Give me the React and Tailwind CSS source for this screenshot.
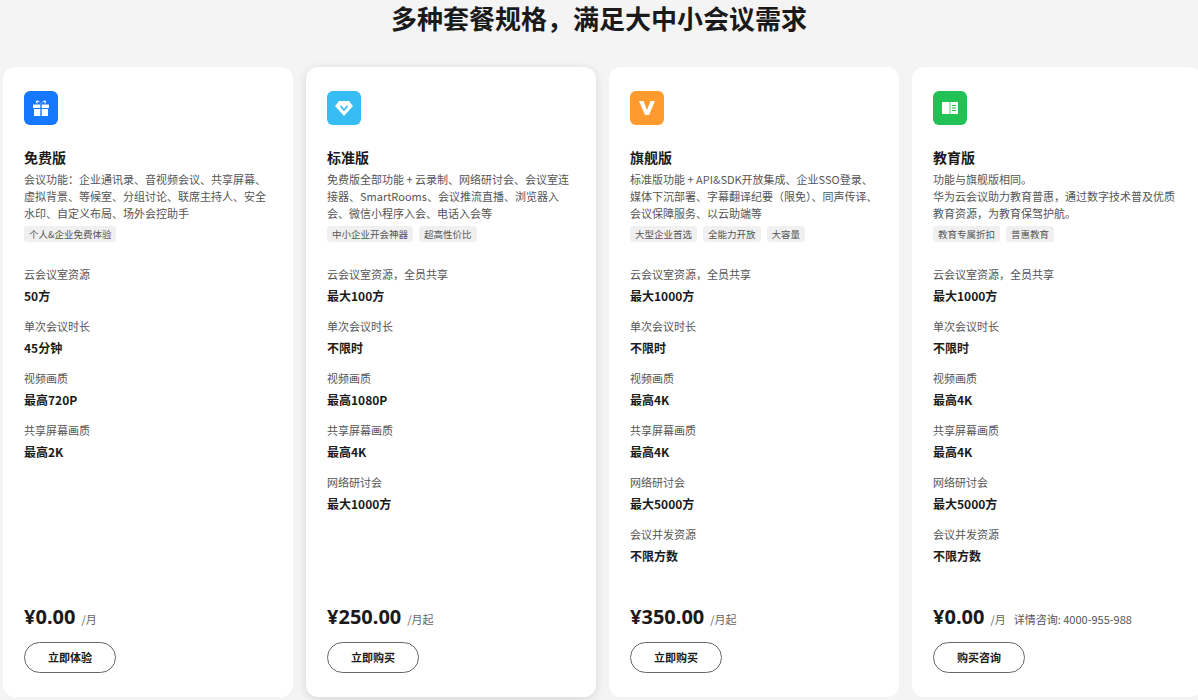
const font = { fontFamily: '"Noto Sans CJK SC", "Noto Sans", sans-serif' };

const plans = [
  { name: '免费版', color: 'bg-[#1677ff]', icon: 'gift',
    desc: '会议功能：企业通讯录、音视频会议、共享屏幕、虚拟背景、等候室、分组讨论、联席主持人、安全水印、自定义布局、场外会控助手',
    tags: ['个人&企业免费体验'],
    specs: [['云会议室资源', '50方'], ['单次会议时长', '45分钟'], ['视频画质', '最高720P'], ['共享屏幕画质', '最高2K']],
    price: '¥0.00', unit: '/月', btn: '立即体验' },
  { name: '标准版', color: 'bg-[#36bdf4]', icon: 'gem', shadow: true,
    desc: '免费版全部功能 + 云录制、网络研讨会、会议室连接器、SmartRooms、会议推流直播、浏览器入会、微信小程序入会、电话入会等',
    tags: ['中小企业开会神器', '超高性价比'],
    specs: [['云会议室资源，全员共享', '最大100方'], ['单次会议时长', '不限时'], ['视频画质', '最高1080P'], ['共享屏幕画质', '最高4K'], ['网络研讨会', '最大1000方']],
    price: '¥250.00', unit: '/月起', btn: '立即购买' },
  { name: '旗舰版', color: 'bg-[#ff9a2e]', icon: 'v',
    desc: '标准版功能 + API&SDK开放集成、企业SSO登录、媒体下沉部署、字幕翻译纪要（限免）、同声传译、会议保障服务、以云助端等',
    tags: ['大型企业首选', '全能力开放', '大容量'],
    specs: [['云会议室资源，全员共享', '最大1000方'], ['单次会议时长', '不限时'], ['视频画质', '最高4K'], ['共享屏幕画质', '最高4K'], ['网络研讨会', '最大5000方'], ['会议并发资源', '不限方数']],
    price: '¥350.00', unit: '/月起', btn: '立即购买' },
  { name: '教育版', color: 'bg-[#22c155]', icon: 'book',
    desc: '功能与旗舰版相同。\n华为云会议助力教育普惠，通过数字技术普及优质教育资源，为教育保驾护航。',
    tags: ['教育专属折扣', '普惠教育'],
    specs: [['云会议室资源，全员共享', '最大1000方'], ['单次会议时长', '不限时'], ['视频画质', '最高4K'], ['共享屏幕画质', '最高4K'], ['网络研讨会', '最大5000方'], ['会议并发资源', '不限方数']],
    price: '¥0.00', unit: '/月', extra: '详情咨询:  4000-955-988', btn: '购买咨询' },
];

function Icon({ type }) {
  if (type === 'gift') return (
    <svg width="20" height="20" viewBox="0 0 20 20" fill="white">
      <path d="M6 2.5c1.5 0 3 1.5 4 3.5c1-2 2.5-3.5 4-3.5c1.5 0 1.5 2.5 0 3h-1c1-.5 1-1.8 0-1.8c-1 0-2 1-2.6 1.8H9.6C9 4.7 8 3.7 7 3.7c-1 0-1 1.3 0 1.8H6c-1.5-.5-1.5-3 0-3z" />
      <rect x="2" y="6.5" width="7.3" height="3.5" /><rect x="10.7" y="6.5" width="7.3" height="3.5" />
      <rect x="3" y="11" width="6.3" height="7" /><rect x="10.7" y="11" width="6.3" height="7" />
    </svg>
  );
  if (type === 'gem') return (
    <svg width="22" height="22" viewBox="0 0 22 22">
      <path d="M6 4h10l4 5l-9 10l-9-10z" fill="white" />
      <path d="M7.5 9l3.5 4l3.5-4" stroke="#36bdf4" strokeWidth="1.8" fill="none" />
    </svg>
  );
  if (type === 'v') return (
    <svg width="22" height="22" viewBox="0 0 22 22">
      <path d="M3 4h4.5l3.5 9l3.5-9H19l-6 14h-4z" fill="white" />
    </svg>
  );
  return (
    <svg width="22" height="22" viewBox="0 0 22 22">
      <rect x="3" y="5" width="16" height="12" fill="white" />
      <rect x="10.6" y="5" width="0.8" height="12" fill="#22c155" />
      <rect x="13" y="8" width="4" height="1" fill="#22c155" /><rect x="13" y="10.5" width="4" height="1" fill="#22c155" /><rect x="13" y="13" width="4" height="1" fill="#22c155" />
    </svg>
  );
}

export default function App() {
  return (
    <div style={font} className="w-[1198px] h-[700px] bg-[#f4f4f4] overflow-hidden">
      <h1 className="text-center text-[26px] font-bold text-[#1a1a1a] leading-[36px] pt-0">多种套餐规格，满足大中小会议需求</h1>
      <div className="flex gap-[13px] pl-[3px] mt-[31px]">
        {plans.map((p) => (
          <div key={p.name} className={`w-[290px] shrink-0 h-[630px] bg-white rounded-[12px] px-[21px] pt-[24px] pb-[24px] flex flex-col ${p.shadow ? 'shadow-[0_2px_10px_rgba(0,0,0,0.12)]' : ''}`}>
            <div className={`w-[34px] h-[34px] rounded-[6px] flex items-center justify-center ${p.color}`}><Icon type={p.icon} /></div>
            <div className="mt-[22px] text-[14px] font-bold text-[#1a1a1a] leading-[20px]">{p.name}</div>
            <div className="mt-[4px] text-[11px] leading-[17px] text-[#555] whitespace-pre-line">{p.desc}</div>
            <div className="flex gap-[6px] mt-[4px]">
              {p.tags.map((t) => <span key={t} className="bg-[#f0f0f0] rounded-[3px] px-[5px] text-[9.5px] leading-[16px] text-[#555]">{t}</span>)}
            </div>
            <div className="mt-[24px] flex flex-col gap-[13px]">
              {p.specs.map(([l, v]) => (
                <div key={l}>
                  <div className="text-[11px] leading-[16px] text-[#555]">{l}</div>
                  <div className="mt-[5px] text-[12px] font-bold leading-[18px] text-[#1a1a1a]">{v}</div>
                </div>
              ))}
            </div>
            <div className="mt-auto flex items-baseline">
              <span className="text-[20px] font-bold text-[#1a1a1a] leading-[26px]" style={{ fontFamily: '"Noto Sans", "Noto Sans CJK SC", sans-serif' }}>{p.price}</span>
              <span className="ml-[6px] text-[11px] text-[#666]">{p.unit}</span>
              {p.extra && <span className="ml-[8px] text-[11px] text-[#555]">{p.extra}</span>}
            </div>
            <button className="mt-[12px] w-[92px] h-[31px] rounded-full border border-[#666] text-[11px] font-bold text-[#1a1a1a] bg-white">{p.btn}</button>
          </div>
        ))}
      </div>
    </div>
  );
}
